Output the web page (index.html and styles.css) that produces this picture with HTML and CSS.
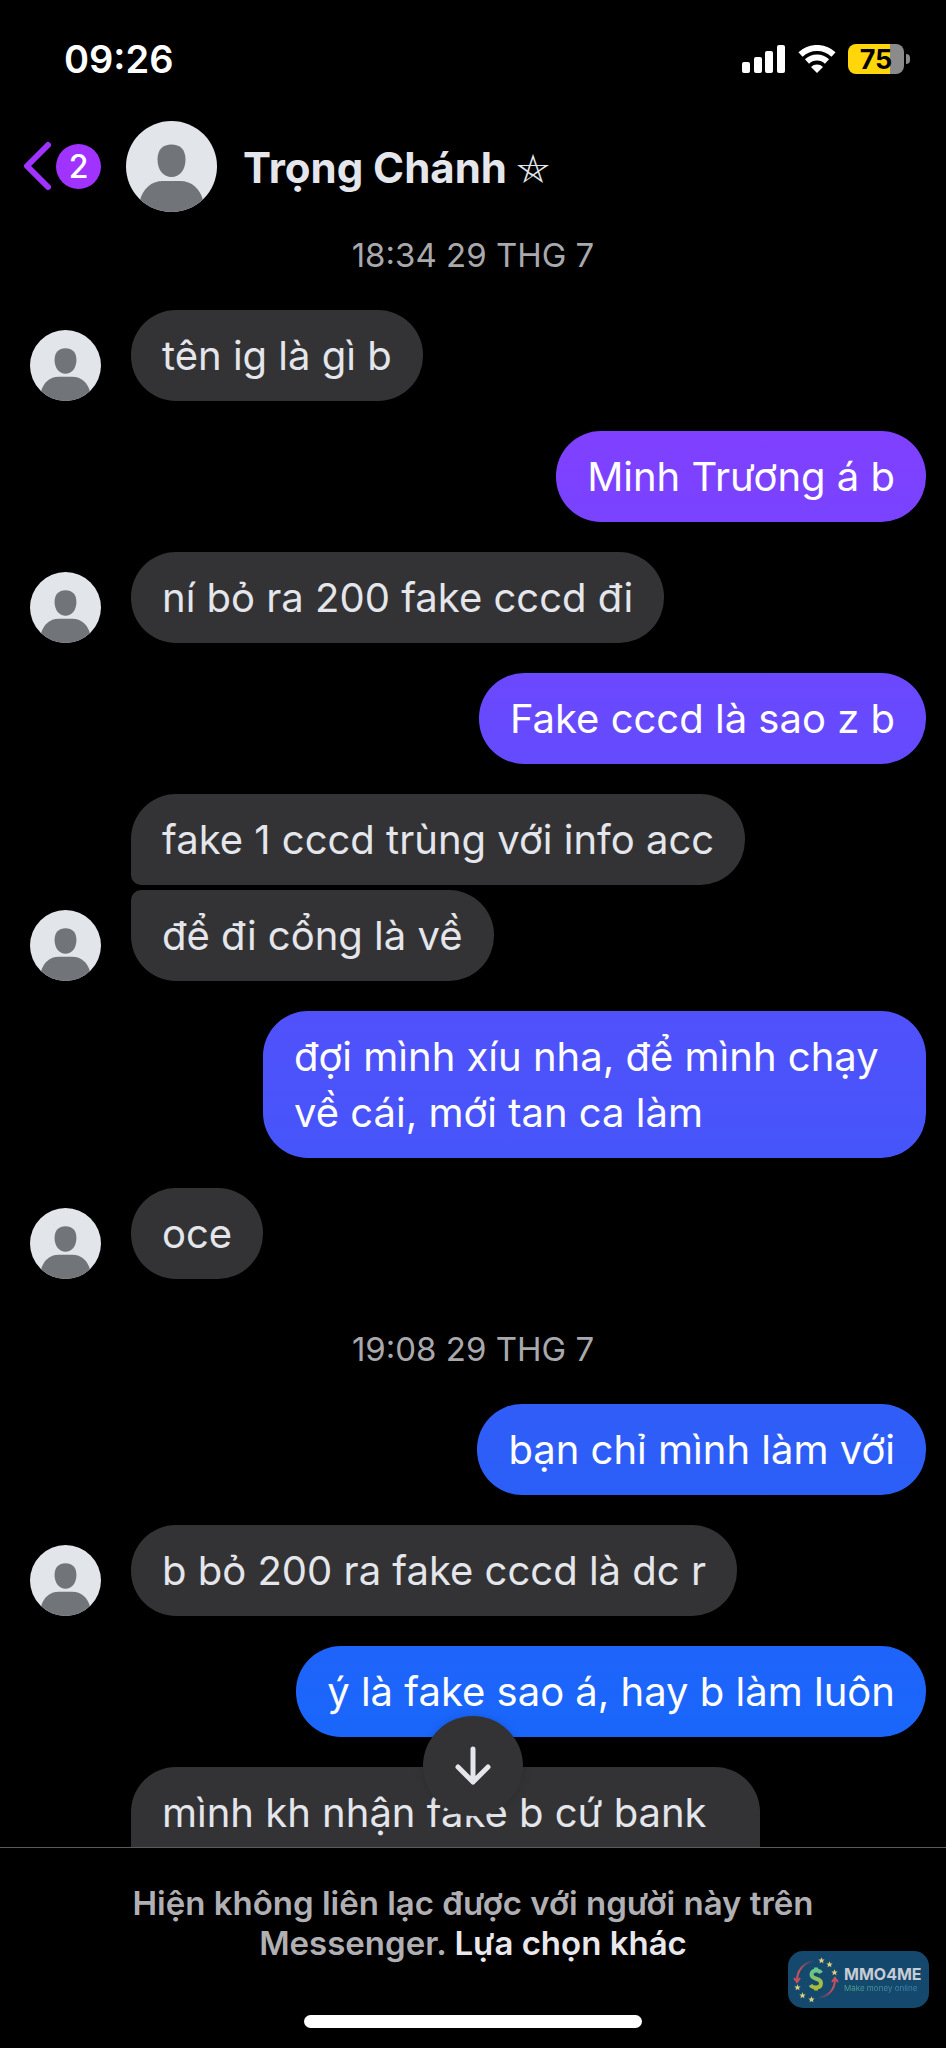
FILE: index.html
```html
<!DOCTYPE html>
<html lang="vi">
<head>
<meta charset="utf-8">
<meta name="viewport" content="width=device-width, initial-scale=1">
<title>Trọng Chánh</title>
<link rel="stylesheet" href="styles.css">
</head>
<body>
<svg class="defs" aria-hidden="true">
  <symbol id="avatar" viewBox="0 0 91 91">
    <clipPath id="disc"><circle cx="45.500" cy="45.500" r="45.500"/></clipPath>
    <g clip-path="url(#disc)">
      <rect width="91" height="91" fill="#e2e5ea"/>
      <path fill="#717479" d="M45.500 23.500C54 23.500 59.500 28.500 59.500 38.500C59.500 49 53.500 56 45.500 56S31.500 49 31.500 38.500C31.500 28.500 37 23.500 45.500 23.500Z"/>
      <path fill="#717479" d="M14 91V79C17 68 25 60 37 60H54C66 60 74 68 77 79V91Z"/>
    </g>
  </symbol>
  <symbol id="mini-star" viewBox="-5 -5 10 10">
    <path d="M0-4.500 1.300-1.600 4.500-1.300 2.100.8 2.800 4 0 2.300-2.800 4-2.100.8-4.500-1.300-1.300-1.600Z"/>
  </symbol>
</svg>
<div class="app">
  <div class="status">
    <time class="clock">09:26</time>
    <div class="indicators">
      <svg class="signal" viewBox="0 0 44 28" fill="#fff" aria-label="Signal">
        <rect x="0" y="17" width="8" height="11" rx="2"/><rect x="12" y="12" width="8" height="16" rx="2"/><rect x="23" y="6" width="8" height="22" rx="2"/><rect x="35" y="0" width="8" height="28" rx="2"/>
      </svg>
      <svg class="wifi" viewBox="0 0 38 28" aria-label="Wi-Fi">
        <g fill="none" stroke="#fff" stroke-width="6">
          <path d="M2.500 9.500A24 24 0 0 1 35.500 9.500"/>
          <path d="M9 16.500A14.500 14.500 0 0 1 29 16.500"/>
        </g>
        <path fill="#fff" d="M19 28 13 22A8.500 8.500 0 0 1 25 22Z"/>
      </svg>
      <div class="battery"><span class="battery-body">75</span><span class="battery-tip"></span></div>
    </div>
  </div>

  <header class="header">
    <button class="back" type="button" aria-label="Quay lại">
      <svg class="chevron" viewBox="0 0 28 50"><path d="M25 4 4 25 25 46" fill="none" stroke="#a033ff" stroke-width="6" stroke-linecap="round" stroke-linejoin="round"/></svg>
      <span class="unread">2</span>
    </button>
    <svg class="avatar-large" aria-hidden="true"><use href="#avatar"/></svg>
    <h1 class="name">Trọng Chánh <span class="name-star">⛤</span></h1>
  </header>

  <main class="thread">
    <div class="messages">
      <time class="date">18:34 29 THG 7</time>
      <div class="row"><svg class="avatar" aria-hidden="true"><use href="#avatar"/></svg><div class="group"><p class="bubble">tên ig là gì b</p></div></div>
      <div class="row row-out"><p class="bubble bubble-out">Minh Trương á b</p></div>
      <div class="row"><svg class="avatar" aria-hidden="true"><use href="#avatar"/></svg><div class="group"><p class="bubble">ní bỏ ra 200 fake cccd đi</p></div></div>
      <div class="row row-out"><p class="bubble bubble-out">Fake cccd là sao z b</p></div>
      <div class="row"><svg class="avatar" aria-hidden="true"><use href="#avatar"/></svg><div class="group"><p class="bubble">fake 1 cccd trùng với info acc</p><p class="bubble">để đi cổng là về</p></div></div>
      <div class="row row-out"><p class="bubble bubble-out">đợi mình xíu nha, để mình chạy về cái, mới tan ca làm</p></div>
      <div class="row"><svg class="avatar" aria-hidden="true"><use href="#avatar"/></svg><div class="group"><p class="bubble">oce</p></div></div>
      <time class="date">19:08 29 THG 7</time>
      <div class="row row-out"><p class="bubble bubble-out">bạn chỉ mình làm với</p></div>
      <div class="row"><svg class="avatar" aria-hidden="true"><use href="#avatar"/></svg><div class="group"><p class="bubble">b bỏ 200 ra fake cccd là dc r</p></div></div>
      <div class="row row-out"><p class="bubble bubble-out">ý là fake sao á, hay b làm luôn</p></div>
      <div class="row"><span class="avatar"></span><div class="group"><p class="bubble bubble-tall">mình kh nhận fake b cứ bank</p></div></div>
    </div>
    <button class="jump" type="button" aria-label="Tin nhắn mới nhất">
      <svg class="jump-icon" viewBox="0 0 38 40"><path d="M19 3V36M4 21 19 36 34 21" fill="none" stroke="#e4e6eb" stroke-width="5" stroke-linecap="round" stroke-linejoin="round"/></svg>
    </button>
  </main>

  <footer class="footer">
    <p class="notice">Hiện không liên lạc được với người này trên Messenger. <a class="options" href="#">Lựa chọn khác</a></p>
    <div class="home"></div>
    <div class="watermark">
      <svg class="mark" viewBox="0 0 46 46" aria-hidden="true">
        <defs>
          <linearGradient id="cash" gradientUnits="userSpaceOnUse" x1="20" y1="11" x2="26" y2="33"><stop offset="0" stop-color="#5cc79a"/><stop offset="1" stop-color="#b5bb2c"/></linearGradient>
          <linearGradient id="arcL" x1="0" y1="1" x2="1" y2="0"><stop offset="0.300" stop-color="#c9505f"/><stop offset="1" stop-color="#c9505f" stop-opacity="0"/></linearGradient>
          <linearGradient id="arcR" x1="1" y1="0" x2="0" y2="1"><stop offset="0.300" stop-color="#c9505f"/><stop offset="1" stop-color="#c9505f" stop-opacity="0"/></linearGradient>
        </defs>
        <path d="M4 24C4 13 11 5 22 4" fill="none" stroke="url(#arcL)" stroke-width="2"/>
        <path d="M1 21 4 25 7 21" fill="none" stroke="#c9505f" stroke-width="2"/>
        <path d="M42 22C42 33 35 40 24 41" fill="none" stroke="url(#arcR)" stroke-width="2"/>
        <path d="M39 25 42 21 45 25" fill="none" stroke="#c9505f" stroke-width="2"/>
        <path d="M28 16C27 14 25 13.500 23 13.500 20 13.500 18.500 15.500 18.500 17.500 18.500 23 28 20.500 28 26 28 29 26 30.500 23 30.500 20.500 30.500 18.500 29.500 17.500 28M23 10.500V14M23 30V33.500" fill="none" stroke="url(#cash)" stroke-width="4"/>
        <g fill="#dccf7c">
          <use href="#mini-star" x="25" y="0" width="7" height="7"/><use href="#mini-star" x="33" y="4" width="7" height="7"/><use href="#mini-star" x="38" y="12" width="7" height="7"/>
          <use href="#mini-star" x="1" y="27" width="7" height="7"/><use href="#mini-star" x="6" y="35" width="7" height="7"/><use href="#mini-star" x="15" y="39" width="7" height="7"/>
        </g>
      </svg>
      <div class="brand"><strong class="brand-name">MMO4ME</strong><span class="brand-tag">Make money online</span></div>
    </div>
  </footer>
</div>
</body>
</html>
```
FILE: styles.css
```css
* { box-sizing: border-box; }

body {
  margin: 0;
  background: #000;
  color: #e4e6eb;
  font-family: Inter, "Liberation Sans", sans-serif;
}

h1, p { margin: 0; }
button { padding: 0; border: 0; background: none; font: inherit; color: inherit; }
svg { display: block; flex: none; }
.defs { position: absolute; width: 0; height: 0; }

.app {
  display: flex;
  flex-direction: column;
  height: 100vh;
  overflow: hidden;
}

/* Status bar */
.status {
  display: flex;
  flex: none;
  align-items: center;
  justify-content: space-between;
  height: 117px;
  padding: 0 36px 0 64px;
  color: #fff;
}
.clock { font-size: 38px; font-weight: 600; line-height: 48px; }
.indicators { display: flex; align-items: center; gap: 12px; }
.signal { width: 44px; height: 28px; }
.wifi { width: 38px; height: 28px; }
.battery { display: flex; align-items: center; gap: 2px; }
.battery-body {
  width: 56px;
  height: 30px;
  border-radius: 8px;
  background: linear-gradient(90deg, #ffd60a 75%, #8b8b8b 75%);
  color: #000;
  font-size: 27px;
  font-weight: 700;
  line-height: 31px;
  text-align: center;
}
.battery-tip { width: 4px; height: 10px; border-radius: 0 4px 4px 0; background: #8b8b8b; }

/* Conversation header */
.header {
  display: flex;
  flex: none;
  align-items: center;
  height: 98px;
  padding-left: 23px;
}
.back { display: flex; align-items: center; gap: 5px; }
.chevron { width: 28px; height: 50px; }
.unread {
  width: 45px;
  height: 45px;
  border-radius: 50%;
  background: #a033ff;
  color: #fff;
  font-size: 32px;
  font-weight: 500;
  line-height: 46px;
}
.avatar-large { width: 91px; height: 91px; margin: 0 26px 0 25px; }
.name { padding-top: 3px; font-size: 42px; font-weight: 700; line-height: 56px; white-space: nowrap; }
.name-star { font-family: "DejaVu Sans", sans-serif; font-size: 40px; font-weight: 400; line-height: 40px; }

/* Thread */
.thread { position: relative; flex: 1; min-height: 0; }
.messages {
  display: flex;
  flex-direction: column;
  gap: 30px;
  height: 100%;
  overflow: hidden;
}
.date {
  flex: none;
  padding: 20px 0 5px;
  color: #a9a9ad;
  font-size: 33px;
  line-height: 40px;
  text-align: center;
}
.row {
  display: flex;
  flex: none;
  align-items: flex-end;
  gap: 30px;
  padding: 0 20px 0 30px;
}
.row-out { justify-content: flex-end; }
.avatar { flex: none; width: 71px; height: 71px; }
.group { display: flex; flex-direction: column; align-items: flex-start; gap: 5px; }
.bubble {
  padding: 18px 31px 17px;
  border-radius: 45px;
  background: #333335;
  font-size: 40px;
  line-height: 56px;
}
.group .bubble:not(:last-child) { border-bottom-left-radius: 10px; }
.group .bubble:not(:first-child) { border-top-left-radius: 10px; }
.bubble-out {
  max-width: 74%;
  background: linear-gradient(#a033ff 5%, #8040ff 21%, #664afe 36%, #4b53fa 53%, #2d5ef7 71%, #1a66fb 84%) fixed;
  color: #fff;
}
.bubble-tall { min-height: 147px; padding-right: 53px; }

.jump {
  position: absolute;
  bottom: 31px;
  left: 50%;
  display: flex;
  align-items: center;
  justify-content: center;
  width: 100px;
  height: 100px;
  margin-left: -50px;
  border-radius: 50%;
  background: #333335;
  box-shadow: 0 0 8px rgba(0, 0, 0, 0.15);
}
.jump-icon { width: 38px; height: 40px; }

/* Footer */
.footer {
  position: relative;
  display: flex;
  flex: none;
  flex-direction: column;
  align-items: center;
  justify-content: space-between;
  height: 201px;
  padding: 35px 120px 20px;
  border-top: 1px solid #5a5a5c;
}
.notice { color: #b0b0b4; font-size: 33px; font-weight: 600; line-height: 40px; text-align: center; }
.options { color: #e8e8ec; text-decoration: none; }
.home { width: 48%; height: 13px; border-radius: 7px; background: #fff; }

.watermark {
  position: absolute;
  right: 17px;
  bottom: 40px;
  display: flex;
  align-items: center;
  gap: 5px;
  width: 141px;
  height: 57px;
  padding-left: 5px;
  border-radius: 15px;
  background: #14486c;
}
.mark { width: 46px; height: 46px; }
.brand { display: flex; flex-direction: column; gap: 1px; }
.brand-name { color: #c6ccd4; font-size: 16px; font-weight: 700; line-height: 16px; }
.brand-tag {
  background: linear-gradient(90deg, #4fa58c, #3a80b5);
  background-clip: text;
  color: transparent;
  font-size: 8px;
  line-height: 11px;
  white-space: nowrap;
}
```
